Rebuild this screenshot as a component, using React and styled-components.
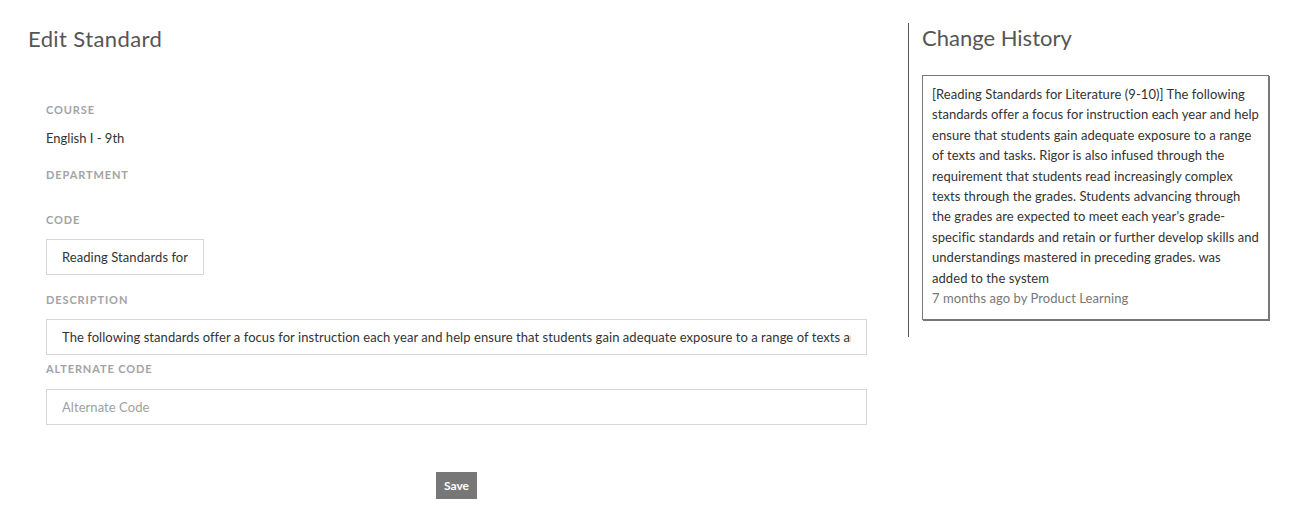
import React from 'react';
import styled, { createGlobalStyle } from 'styled-components';

const GlobalStyle = createGlobalStyle`
  html, body {
    margin: 0;
    padding: 0;
    background: #fff;
  }
  body {
    font-family: Lato, "Open Sans", "Liberation Sans", sans-serif;
    color: #333;
  }
  * {
    box-sizing: border-box;
  }
`;

const historyText =
  "[Reading Standards for Literature (9-10)] The following standards offer a focus for instruction each year and help ensure that students gain adequate exposure to a range of texts and tasks. Rigor is also infused through the requirement that students read increasingly complex texts through the grades. Students advancing through the grades are expected to meet each year's grade-specific standards and retain or further develop skills and understandings mastered in preceding grades. was added to the system";

const descriptionText =
  'The following standards offer a focus for instruction each year and help ensure that students gain adequate exposure to a range of texts and tasks. Rigor is also infused through the requirement that students read increasingly complex texts through the grades.';

const App = () => {
  return (
    <>
      <GlobalStyle />
      <Page>
        <EditPanel>
          <Heading>Edit Standard</Heading>
          <Form onSubmit={(e) => e.preventDefault()}>
            <Field $after={19}>
              <Label>Course</Label>
              <Value>English I - 9th</Value>
            </Field>
            <Field $after={29}>
              <Label>Department</Label>
            </Field>
            <Field $after={17}>
              <Label>Code</Label>
              <Input $width="158px" readOnly defaultValue="Reading Standards for Literature (9-10)" />
            </Field>
            <Field $after={6}>
              <Label>Description</Label>
              <Input readOnly defaultValue={descriptionText} />
            </Field>
            <Field $after={47}>
              <Label $gap={12}>Alternate Code</Label>
              <Input placeholder="Alternate Code" />
            </Field>
            <Actions>
              <SaveButton type="submit">Save</SaveButton>
            </Actions>
          </Form>
        </EditPanel>

        <HistoryPanel>
          <HistoryHeading>Change History</HistoryHeading>
          <HistoryCard>
            <HistoryText>{historyText}</HistoryText>
            <HistoryMeta>7 months ago by Product Learning</HistoryMeta>
          </HistoryCard>
        </HistoryPanel>
      </Page>
    </>
  );
};

const Page = styled.div`
  display: flex;
  align-items: flex-start;
  width: 1291px;
`;

const EditPanel = styled.section`
  flex: 0 0 908px;
  padding: 24px 41px 0 28px;
`;

const Heading = styled.h1`
  margin: 0 0 48px;
  font-size: 22px;
  line-height: 30px;
  font-weight: 400;
  color: #555;
  letter-spacing: 0.4px;
`;

const Form = styled.form`
  padding-left: 18px;
`;

const Field = styled.div`
  margin-bottom: ${({ $after }) => $after}px;
`;

const Label = styled.div`
  font-size: 11px;
  line-height: 16px;
  font-weight: 700;
  letter-spacing: 0.9px;
  text-transform: uppercase;
  color: #a3a3a3;
  margin-bottom: ${({ $gap = 11 }) => $gap}px;
`;

const Value = styled.div`
  font-size: 13px;
  line-height: 20px;
  margin-top: -1px;
  color: #333;
`;

const Input = styled.input`
  display: block;
  width: ${({ $width = '100%' }) => $width};
  height: 36px;
  padding: 0 15px;
  border: 1px solid #d6d6d6;
  border-radius: 0;
  background: #fff;
  font-family: Lato, "Open Sans", "Liberation Sans", sans-serif;
  font-size: 13px;
  letter-spacing: 0.06px;
  color: #333;
  outline: none;

  &::placeholder {
    color: #a0a0a0;
  }
`;

const Actions = styled.div`
  display: flex;
  justify-content: center;
`;

const SaveButton = styled.button`
  height: 27px;
  padding: 0 8px;
  border: none;
  border-radius: 0;
  background: #777;
  color: #fff;
  font-family: Lato, "Liberation Sans", Arial, sans-serif;
  font-size: 12px;
  font-weight: 700;
  cursor: pointer;
`;

const HistoryPanel = styled.aside`
  flex: 0 0 362px;
  margin-top: 23px;
  padding: 0 0 17px 13px;
  border-left: 1px solid #555;
`;

const HistoryHeading = styled.h2`
  margin: 0 0 22px;
  font-size: 22px;
  line-height: 30px;
  font-weight: 400;
  color: #555;
`;

const HistoryCard = styled.div`
  width: 347px;
  padding: 8px 9px 11px;
  border: 1px solid #777;
  box-shadow: 1px 1px 0 #777;
  font-size: 13px;
  line-height: 20.4px;
  letter-spacing: 0.06px;
`;

const HistoryText = styled.div`
  color: #333;
`;

const HistoryMeta = styled.div`
  color: #777;
`;

export default App;
